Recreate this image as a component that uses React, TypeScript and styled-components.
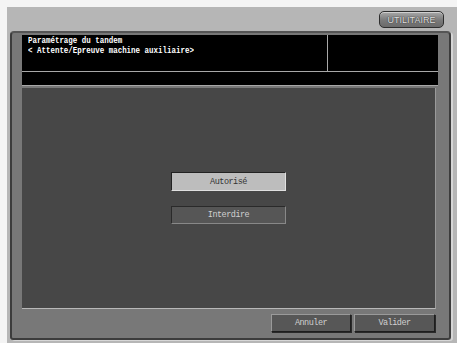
import React from "react";
import styled, { createGlobalStyle } from "styled-components";

const Global = createGlobalStyle`
  html, body { margin: 0; padding: 0; background: #f4f4f4; }
  #root { width: 457px; height: 343px; }
`;

const mono = `"Liberation Mono", "DejaVu Sans Mono", monospace`;

const Screen = styled.div`
  position: relative;
  margin: 7px 0 0 7px;
  width: 450px;
  height: 336px;
  background: #b6b6b6;
  box-sizing: border-box;
  padding: 0 0 0 3px;
  display: flex;
  flex-direction: column;
`;

const TopBar = styled.div`
  height: 24px;
  display: flex;
  justify-content: flex-end;
  align-items: flex-start;
  padding: 4px 13px 0 0;
  box-sizing: border-box;
`;

const UtilButton = styled.div`
  width: 65px;
  height: 17px;
  box-sizing: border-box;
  border: 1.5px solid #2e2e2e;
  border-radius: 5px;
  background: linear-gradient(#a8a8a8, #7a7a7a 55%, #6a6a6a);
  box-shadow: inset 0 1px 0 #d0d0d0;
  display: flex;
  align-items: center;
  justify-content: center;
  font-family: "Liberation Sans", Arial, sans-serif;
  font-size: 9px;
  color: #e0e0e0;
  text-shadow: 0 0 1px #333, 0 0 1px #333;
`;

const Panel = styled.div`
  width: 441px;
  height: 309px;
  box-sizing: border-box;
  background: #787878;
  border: 2px solid #3c3c3c;
  border-top-color: #555;
  border-radius: 4px 4px 3px 3px;
  box-shadow: 2px 1px 0 #d6d6d6;
  padding: 2px 11px 0 10px;
  display: flex;
  flex-direction: column;
`;

const Header = styled.div`
  background: #000;
  display: flex;
  flex-direction: column;
`;

const TitleRow = styled.div`
  height: 36px;
  display: flex;
  border-bottom: 1px solid #a8a8a8;
`;

const TitleCell = styled.div`
  flex: 1;
  padding: 2px 0 0 6px;
  overflow: hidden;
`;

const TitleText = styled.div`
  color: #fff;
  font-family: ${mono};
  font-size: 9px;
  line-height: 9.5px;
  white-space: pre;
  font-weight: bold;
  transform: scaleX(0.83);
  transform-origin: left top;
`;

const SideCell = styled.div`
  width: 110px;
  border-left: 1px solid #a8a8a8;
`;

const Strip = styled.div`
  height: 13px;
  border-bottom: 1px solid #a8a8a8;
`;

const Content = styled.div`
  margin-top: 2px;
  margin-right: 2px;
  height: 221px;
  background: #474747;
  border-right: 1px solid #9a9a9a;
  border-bottom: 1px solid #b8b8b8;
  box-sizing: border-box;
  display: flex;
  flex-direction: column;
  align-items: center;
  justify-content: center;
  gap: 15px;
`;

const OptButton = styled.div<{ $on?: boolean }>`
  width: 115px;
  height: ${(p) => (p.$on ? 19 : 18)}px;
  box-sizing: border-box;
  border: 1px solid ${(p) => (p.$on ? "#222" : "#2a2a2a")};
  border-right-color: ${(p) => (p.$on ? "#e0e0e0" : "#888")};
  border-bottom-color: ${(p) => (p.$on ? "#e0e0e0" : "#888")};
  background: ${(p) => (p.$on ? "#bdbdbd" : "#565656")};
  color: ${(p) => (p.$on ? "#333" : "#d0d0d0")};
  display: flex;
  align-items: center;
  justify-content: center;
  font-family: ${mono};
  font-size: 8.5px;
  letter-spacing: -0.5px;
`;

const Footer = styled.div`
  display: flex;
  justify-content: flex-end;
  gap: 3px;
  padding: 5px 3px 0 0;
`;

const FootButton = styled.div<{ $w: number }>`
  width: ${(p) => p.$w}px;
  height: 18px;
  box-sizing: border-box;
  background: #575757;
  border: 1px solid #9a9a9a;
  border-right-color: #1e1e1e;
  border-bottom-color: #1e1e1e;
  box-shadow: 1px 1px 0 #2a2a2a;
  color: #d0d0d0;
  display: flex;
  align-items: center;
  justify-content: center;
  font-family: ${mono};
  font-size: 8.5px;
  letter-spacing: -0.5px;
`;

export default function App() {
  return (
    <>
      <Global />
      <Screen>
        <TopBar>
          <UtilButton>UTILITAIRE</UtilButton>
        </TopBar>
        <Panel>
          <Header>
            <TitleRow>
              <TitleCell>
                <TitleText>{"Paramétrage du tandem\n< Attente/Epreuve machine auxiliaire>"}</TitleText>
              </TitleCell>
              <SideCell />
            </TitleRow>
            <Strip />
          </Header>
          <Content>
            <OptButton $on>Autorisé</OptButton>
            <OptButton>Interdire</OptButton>
          </Content>
          <Footer>
            <FootButton $w={80}>Annuler</FootButton>
            <FootButton $w={81}>Valider</FootButton>
          </Footer>
        </Panel>
      </Screen>
    </>
  );
}
